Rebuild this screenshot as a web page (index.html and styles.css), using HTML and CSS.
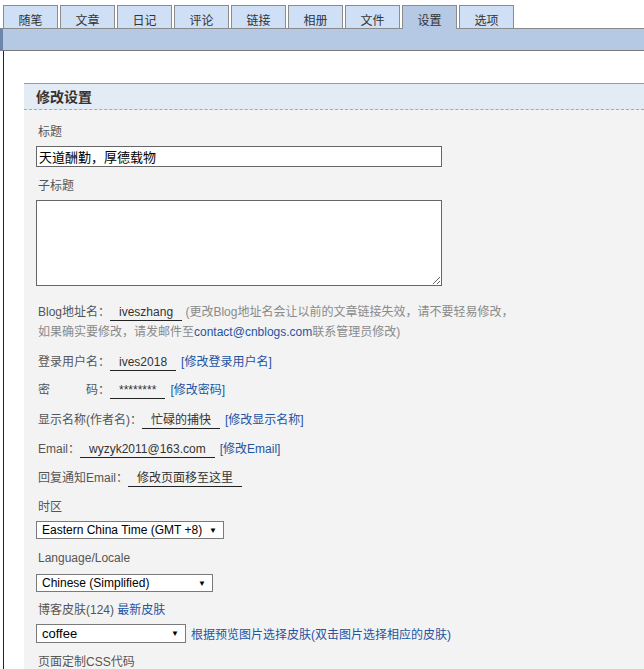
FILE: index.html
```html
<!DOCTYPE html>
<html lang="zh-CN">
<head>
<meta charset="utf-8">
<title>修改设置</title>
<link rel="stylesheet" href="styles.css">
</head>
<body>
<nav class="tabs">
  <a class="tab">随笔</a>
  <a class="tab">文章</a>
  <a class="tab">日记</a>
  <a class="tab">评论</a>
  <a class="tab">链接</a>
  <a class="tab">相册</a>
  <a class="tab">文件</a>
  <a class="tab active">设置</a>
  <a class="tab">选项</a>
</nav>
<div class="bar"></div>
<div class="page">
  <section class="panel">
    <h2 class="panel-head">修改设置</h2>
    <div class="panel-body">
      <div class="label">标题</div>
      <input class="text" type="text" value="天道酬勤，厚德载物">

      <div class="label gap10">子标题</div>
      <textarea class="area"></textarea>

      <div class="row blog">Blog地址名：<span class="val">iveszhang</span> <span class="note">(更改Blog地址名会让以前的文章链接失效，请不要轻易修改，<br>如果确实要修改，请发邮件至<a class="link">contact@cnblogs.com</a>联系管理员修改)</span></div>

      <div class="row r10">登录用户名：<span class="val">ives2018</span><a class="link act">[修改登录用户名]</a></div>
      <div class="row r8">密　　　码：<span class="val">********</span><a class="link act">[修改密码]</a></div>
      <div class="row r10">显示名称(作者名)：<span class="val">忙碌的捕快</span><a class="link act">[修改显示名称]</a></div>
      <div class="row r9">Email：<span class="val">wyzyk2011@163.com</span><a class="link act">[修改Email]</a></div>
      <div class="row r9">回复通知Email：<span class="val">修改页面移至这里</span></div>

      <div class="label gap10">时区</div>
      <div class="select tz"><span class="opt">Eastern China Time (GMT +8)</span><span class="arrow">▼</span></div>

      <div class="label gap10">Language/Locale</div>
      <div class="select lang"><span class="opt">Chinese (Simplified)</span><span class="arrow">▼</span></div>

      <div class="label gap9">博客皮肤(124) <a class="link">最新皮肤</a></div>
      <div class="skin-row">
        <div class="select skin"><span class="opt">coffee</span><span class="arrow">▼</span></div>
        <a class="link">根据预览图片选择皮肤(双击图片选择相应的皮肤)</a>
      </div>

      <div class="label gap10">页面定制CSS代码</div>
    </div>
  </section>
</div>
</body>
</html>
```
FILE: styles.css
```css
html, body {
  margin: 0;
  padding: 0;
  background: #fff;
  overflow: hidden;
}
body {
  font-family: "Liberation Sans", "Noto Sans CJK SC", sans-serif;
  font-size: 12px;
  color: #333;
}
.tabs {
  display: flex;
  align-items: flex-start;
  gap: 2px;
  height: 23px;
  padding: 5px 0 0 3px;
}
.tab {
  box-sizing: border-box;
  width: 55px;
  height: 23px;
  border: 1px solid #8c8c8c;
  border-bottom: none;
  background: #cfe0f6;
  color: #333;
  text-align: center;
  font-size: 12px;
  line-height: 16px;
  padding-top: 7px;
}
.tab.active {
  height: 24px;
  margin-bottom: -1px;
  background: #b5c8e4;
  position: relative;
  z-index: 1;
}
.bar {
  height: 21px;
  border-top: 1px solid #8a8a8a;
  border-bottom: 1px solid #7a7a7a;
  border-left: 3px solid #6d84ad;
  background: #b5c8e4;
}
.page {
  margin-left: 3px;
  border-left: 1px solid #222;
  min-height: 640px;
  padding-top: 32px;
}
.panel {
  margin-left: 20px;
  border-top: 1px solid #9a9a9a;
  background: #f3f3f3;
}
.panel-head {
  margin: 0;
  height: 25px;
  line-height: 27px;
  padding-left: 12px;
  background: #e3ebf5;
  border-bottom: 1px dashed #a8a8a8;
  font-size: 14px;
  font-weight: bold;
  color: #333;
}
.panel-body {
  padding: 13px 0 20px 12px;
  color: #555;
}
.label {
  line-height: 18px;
  padding-left: 2px;
}
.gap10 { margin-top: 10px; }
.gap9 { margin-top: 9px; }
.text {
  display: block;
  box-sizing: border-box;
  width: 406px;
  height: 21px;
  margin: 5px 0 0;
  padding: 0 2px;
  border: 1px solid #666;
  background: #fff;
  font-family: "Liberation Sans", "Noto Sans CJK SC", sans-serif;
  font-size: 13px;
  color: #000;
  outline: none;
}
.area {
  display: block;
  box-sizing: border-box;
  width: 406px;
  height: 86px;
  margin: 5px 0 0;
  border: 1px solid #666;
  background: #fff;
}
.row {
  line-height: 20px;
  padding-left: 2px;
}
.row.blog { margin-top: 16px; }
.r10 { margin-top: 10px; }
.r9 { margin-top: 9px; }
.r8 { margin-top: 8px; }
.val {
  display: inline-block;
  line-height: 15px;
  padding: 0 9px;
  border-bottom: 1px solid #222;
  color: #333;
  text-align: center;
}
.note { color: #8a8a8a; }
.link {
  color: #2353a3;
  text-decoration: none;
}
.act { margin-left: 5px; }
.select {
  box-sizing: border-box;
  display: flex;
  align-items: center;
  justify-content: space-between;
  height: 18px;
  padding: 0 6px 0 5px;
  border: 1px solid #7a7a7a;
  background: #fff;
  color: #000;
  font-size: 12px;
}
.opt { white-space: nowrap; }
.tz { width: 188px; margin-top: 5px; }
.lang { width: 177px; margin-top: 7px; }
.skin { width: 150px; height: 19px; font-size: 13px; }
.arrow { font-size: 8px; color: #000; }
.skin-row {
  display: flex;
  align-items: center;
  gap: 5px;
  margin-top: 5px;
}
```
